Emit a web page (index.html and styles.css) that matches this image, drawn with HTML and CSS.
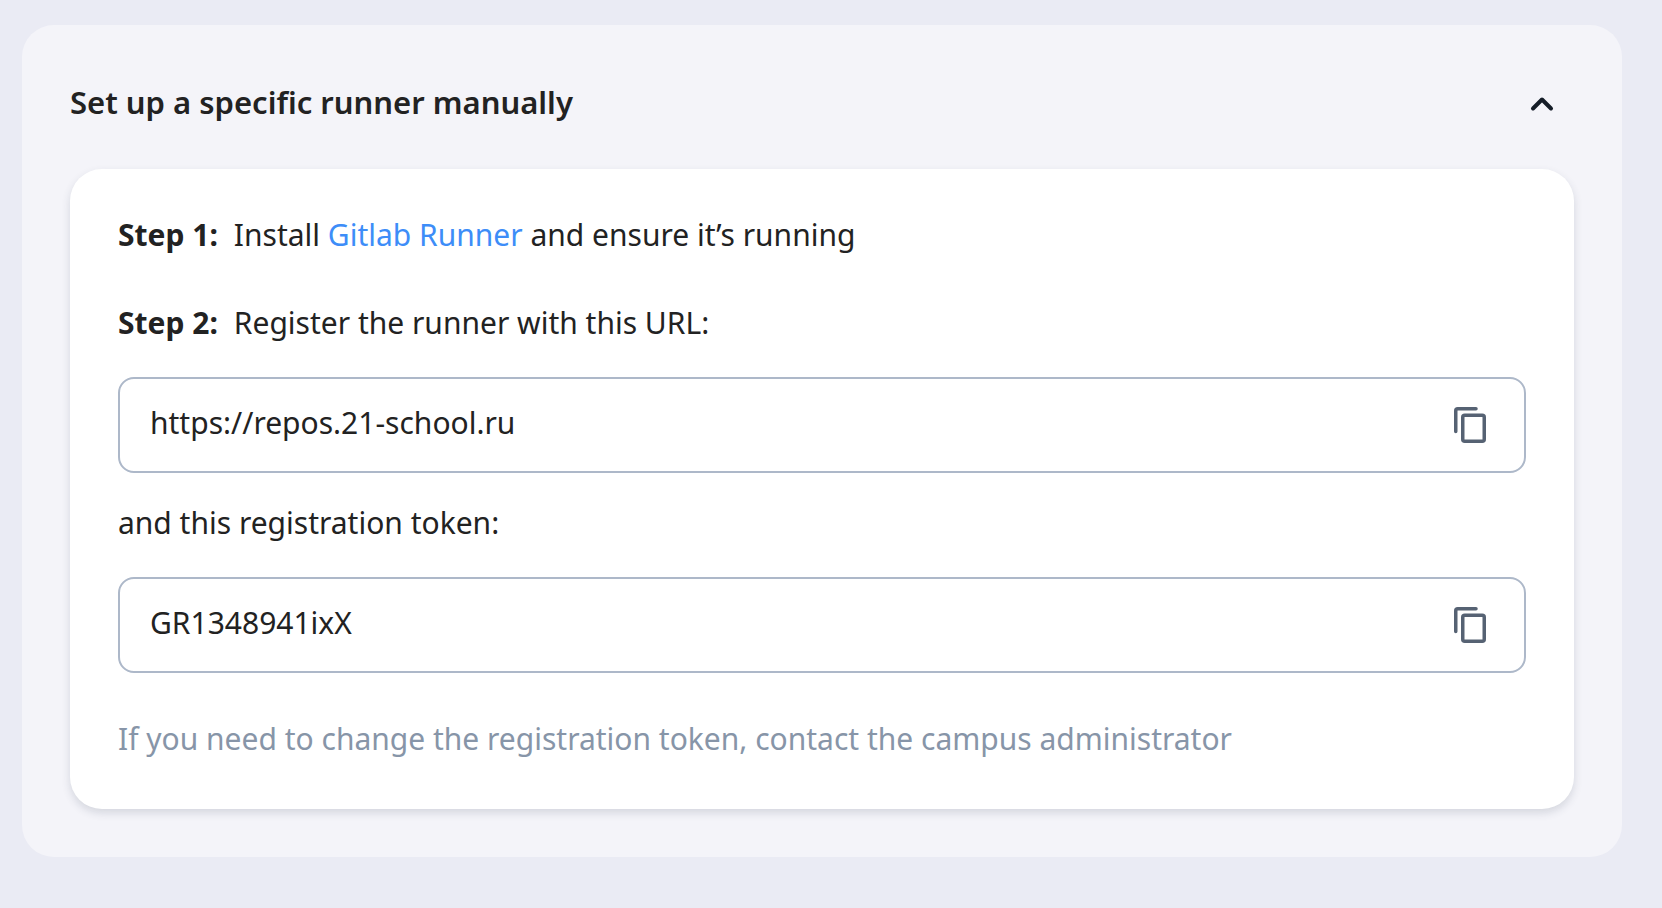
FILE: index.html
```html
<!DOCTYPE html>
<html lang="en">
<head>
<meta charset="utf-8">
<meta name="viewport" content="width=device-width, initial-scale=1">
<title>Runner setup</title>
<link rel="stylesheet" href="styles.css">
</head>
<body>
<main class="panel">
  <header class="panel-header">
    <h1 class="panel-title">Set up a specific runner manually</h1>
    <button class="icon-button toggle" type="button" aria-label="Collapse section" aria-expanded="true" aria-controls="setup-card">
      <svg width="32" height="32" viewBox="0 0 32 32" fill="none" stroke="currentColor" stroke-width="4" stroke-linecap="round" stroke-linejoin="round" aria-hidden="true"><path d="M7 22.500 16 13.500 25 22.500"/></svg>
    </button>
  </header>
  <section class="card" id="setup-card">
    <div class="step">
      <strong class="step-label">Step 1:</strong>
      <p class="text">Install <a class="link" href="#">Gitlab Runner</a> and ensure it’s running</p>
    </div>
    <div class="step step-next">
      <strong class="step-label">Step 2:</strong>
      <label class="text" for="runner-url">Register the runner with this URL:</label>
    </div>
    <div class="field">
      <input class="field-input" id="runner-url" type="text" value="https://repos.21-school.ru" readonly>
      <button class="icon-button copy" type="button" aria-label="Copy URL">
        <svg width="48" height="48" viewBox="0 0 48 48" fill="none" stroke="currentColor" stroke-width="3.500" stroke-linecap="round" stroke-linejoin="round" aria-hidden="true"><path d="M9.750 30.500V9.750a2 2 0 0 1 2-2H30"/><rect x="16.750" y="14.250" width="21.500" height="26" rx="2"/></svg>
      </button>
    </div>
    <label class="text token-label" for="runner-token">and this registration token:</label>
    <div class="field">
      <input class="field-input" id="runner-token" type="text" value="GR1348941ixX" readonly>
      <button class="icon-button copy" type="button" aria-label="Copy token">
        <svg width="48" height="48" viewBox="0 0 48 48" fill="none" stroke="currentColor" stroke-width="3.500" stroke-linecap="round" stroke-linejoin="round" aria-hidden="true"><path d="M9.750 30.500V9.750a2 2 0 0 1 2-2H30"/><rect x="16.750" y="14.250" width="21.500" height="26" rx="2"/></svg>
      </button>
    </div>
    <p class="text note">If you need to change the registration token, contact the campus administrator</p>
  </section>
</main>
</body>
</html>
```
FILE: styles.css
```css
* {
  box-sizing: border-box;
}

body {
  margin: 0;
  padding: 25px 40px 25px 22px;
  background: #eaebf4;
  color: #222;
  font-family: "Noto Sans", "Open Sans", sans-serif;
  font-size: 30px;
  line-height: 40px;
}

.panel {
  padding: 53px 48px 48px;
  border-radius: 32px;
  background: #f4f4f9;
}

.panel-header {
  display: flex;
  align-items: center;
  justify-content: space-between;
  margin-bottom: 43px;
}

.panel-title {
  margin: 0;
  font-size: 31px;
  font-weight: 600;
  line-height: 48px;
}

.icon-button {
  display: flex;
  align-items: center;
  justify-content: center;
  flex: none;
  padding: 0;
  border: 0;
  background: none;
  cursor: pointer;
}

.toggle {
  width: 64px;
  height: 48px;
  color: #151d28;
}

.card {
  padding: 46px 48px 50px;
  border-radius: 32px;
  background: #fff;
  box-shadow: 0 4px 8px rgba(48, 62, 88, 0.16);
}

.step {
  display: flex;
  gap: 16px;
}

.step-next {
  margin-top: 48px;
}

.step-label {
  flex: none;
  font-weight: 700;
}

.text {
  display: block;
  margin: 0;
}

.link {
  color: #3d8df8;
  text-decoration: none;
}

.field {
  display: flex;
  align-items: center;
  height: 96px;
  margin-top: 34px;
  padding: 0 30px;
  border: 2px solid #adb8c9;
  border-radius: 16px;
}

.field-input {
  flex: 1;
  min-width: 0;
  padding: 0 0 4px;
  border: 0;
  outline: 0;
  background: none;
  color: inherit;
  font: inherit;
}

.copy {
  width: 48px;
  height: 48px;
  color: #566273;
}

.token-label {
  margin-top: 30px;
}

.note {
  margin-top: 46px;
  color: #8795a8;
}
```
